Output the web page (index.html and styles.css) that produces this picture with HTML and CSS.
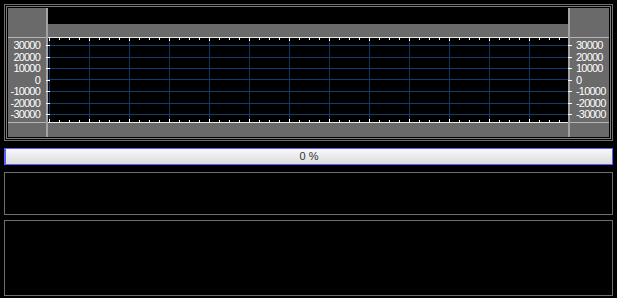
FILE: index.html
```html
<!DOCTYPE html>
<html lang="en">
<head>
<meta charset="UTF-8" />
<title>Scope</title>
<link rel="stylesheet" href="styles.css">
</head>
<body>

<div class="scope">
  <div class="scope-inner">
    <div class="axis axis-left">
      <div class="axis-head"></div>
      <div class="axis-labels">
        <span>30000</span><span>20000</span><span>10000</span><span>0</span>
        <span>-10000</span><span>-20000</span><span>-30000</span>
      </div>
      <div class="axis-foot"></div>
    </div>

    <div class="plot">
      <div class="plot-top"></div>
      <div class="plot-band"></div>
      <svg class="plot-grid" width="520" height="86" viewBox="0 0 520 86">
        <defs>
          <pattern id="vgrid" width="40" height="86" patternUnits="userSpaceOnUse">
            <rect x="1" y="0" width="1" height="86" fill="#0d355f" />
          </pattern>
          <pattern id="minorTop" width="10" height="4" patternUnits="userSpaceOnUse">
            <rect x="1" y="1" width="1" height="2" fill="#ffffff" />
          </pattern>
          <pattern id="majorTop" width="40" height="4" patternUnits="userSpaceOnUse">
            <rect x="1" y="0" width="1" height="4" fill="#ffffff" />
          </pattern>
          <pattern id="minorBot" width="10" height="86" patternUnits="userSpaceOnUse">
            <rect x="1" y="83" width="1" height="2" fill="#ffffff" />
          </pattern>
          <pattern id="majorBot" width="40" height="86" patternUnits="userSpaceOnUse">
            <rect x="1" y="82" width="1" height="3" fill="#ffffff" />
          </pattern>
        </defs>
        <rect x="0" y="0" width="520" height="86" fill="#000" />
        <!-- grid -->
        <rect x="0" y="1" width="520" height="84" fill="url(#vgrid)" />
        <g fill="#0f3d6e">
          <rect x="0" y="8" width="520" height="1" />
          <rect x="0" y="20" width="520" height="1" />
          <rect x="0" y="31" width="520" height="1" />
          <rect x="0" y="42" width="520" height="1" />
          <rect x="0" y="54" width="520" height="1" />
          <rect x="0" y="66" width="520" height="1" />
          <rect x="0" y="77" width="520" height="1" />
        </g>
        <!-- tick rulers -->
        <rect x="0" y="0" width="520" height="1" fill="#e8e8e8" />
        <rect x="0" y="0" width="520" height="4" fill="url(#minorTop)" />
        <rect x="0" y="0" width="520" height="4" fill="url(#majorTop)" />
        <rect x="0" y="85" width="520" height="1" fill="#e8e8e8" />
        <rect x="0" y="80" width="520" height="6" fill="url(#minorBot)" />
        <rect x="0" y="80" width="520" height="6" fill="url(#majorBot)" />
      </svg>
      <div class="plot-band plot-band-bottom"></div>
    </div>

    <div class="axis axis-right">
      <div class="axis-head"></div>
      <div class="axis-labels">
        <span>30000</span><span>20000</span><span>10000</span><span>0</span>
        <span>-10000</span><span>-20000</span><span>-30000</span>
      </div>
      <div class="axis-foot"></div>
    </div>
  </div>
</div>

<div class="progress">0 %</div>

<div class="panel panel-small"></div>
<div class="panel panel-large"></div>

</body>
</html>
```

FILE: styles.css
```css
html, body {
  margin: 0;
  padding: 0;
  background: #000;
  font-family: 'Liberation Sans', Arial, sans-serif;
}
body {
  padding-top: 4px;
}
.scope {
  margin-left: 4px;
  width: 609px;
  box-sizing: border-box;
  border: 1px solid #707070;
  padding: 1px;
}
.scope-inner {
  display: flex;
  border: 1px solid #7c7c7c;
  padding: 1px;
  height: 129px;
}
.axis {
  display: flex;
  flex-direction: column;
  background: #6a6a6a;
  color: #fff;
  font-size: 11px;
  letter-spacing: -0.8px;
}
.axis-left {
  width: 38px;
  border-right: 2px solid #a2a2a2;
}
.axis-right {
  width: 39px;
  border-left: 2px solid #a2a2a2;
}
.axis-head {
  height: 29px;
  border-bottom: 1px solid #b4b4b4;
}
.axis-labels {
  height: 84px;
  display: flex;
  flex-direction: column;
  padding-top: 2px;
  box-sizing: border-box;
}
.axis-labels span {
  position: relative;
  height: 11.5px;
  line-height: 11.5px;
}
.axis-left .axis-labels span {
  text-align: right;
  padding-right: 6px;
}
.axis-right .axis-labels span {
  padding-left: 6px;
}
.axis-left .axis-labels span::after,
.axis-right .axis-labels span::before {
  content: '';
  position: absolute;
  top: 5px;
  width: 4px;
  height: 1px;
  background: #fff;
}
.axis-left .axis-labels span::after {
  right: -4px;
}
.axis-right .axis-labels span::before {
  left: -2px;
}
.axis-foot {
  flex: 1;
  border-top: 1px solid #b4b4b4;
}
.plot {
  width: 520px;
  display: flex;
  flex-direction: column;
}
.plot-top {
  height: 16px;
  background: #000;
}
.plot-band {
  height: 13px;
  background: #6a6a6a;
}
.plot-band-bottom {
  height: 14px;
}
.plot-grid {
  display: block;
}
.progress {
  margin: 7px 0 0 4px;
  width: 609px;
  height: 17px;
  box-sizing: border-box;
  border: 1px solid #5c5cff;
  border-left-width: 2px;
  background: linear-gradient(#f8f8f8, #dcdcdc);
  color: #333;
  font-size: 11px;
  line-height: 15px;
  text-align: center;
}
.panel {
  margin-left: 4px;
  width: 609px;
  box-sizing: border-box;
  border: 1px solid #6e6e6e;
}
.panel-small {
  margin-top: 7px;
  height: 43px;
}
.panel-large {
  margin-top: 5px;
  height: 76px;
}
```
